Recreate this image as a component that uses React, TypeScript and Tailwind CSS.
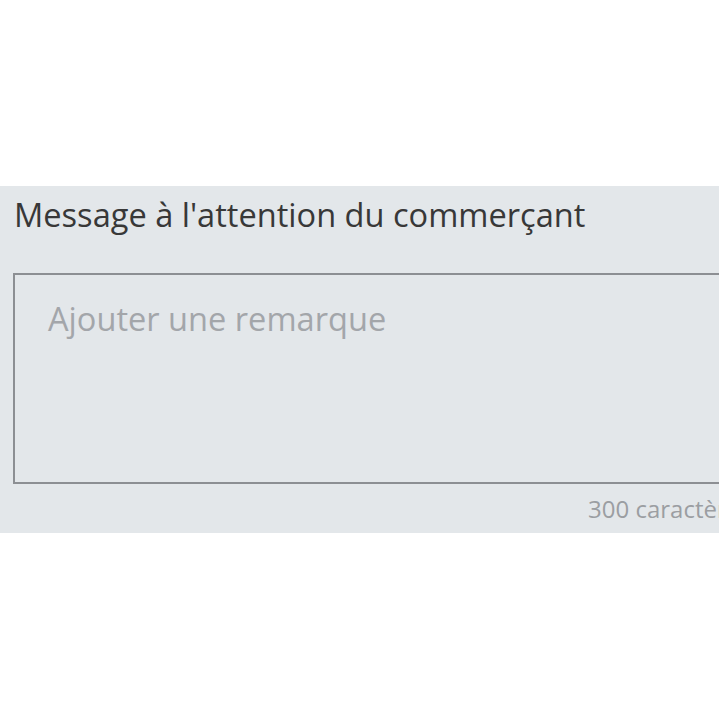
import React from 'react';

export default function App() {
  return (
    <div className="w-[719px] h-[720px] bg-white overflow-hidden" style={{ fontFamily: '"Open Sans", sans-serif' }}>
      <div className="mt-[186px] h-[347px] w-[719px] bg-[#e3e7ea] overflow-hidden">
        <div className="w-[900px]">
          <h2 className="pl-[14px] pt-[7px] text-[32.6px] leading-[44px] text-[#383838] whitespace-nowrap">
            Message à l'attention du commerçant
          </h2>
          <div className="ml-[13px] mt-[36px] h-[211px] border-2 border-[#8c8f93] bg-[#e3e7ea]">
            <textarea
              className="w-full h-full resize-none bg-transparent outline-none pl-[33px] pt-[22px] text-[32.6px] leading-[44px] text-[#333333] placeholder:text-[#a3a6aa]"
              placeholder="Ajouter une remarque"
            />
          </div>
          <p className="pl-[588px] pt-[10px] text-[24px] leading-[30px] text-[#9b9ea2] whitespace-nowrap">
            300 caractères restants
          </p>
        </div>
      </div>
    </div>
  );
}
